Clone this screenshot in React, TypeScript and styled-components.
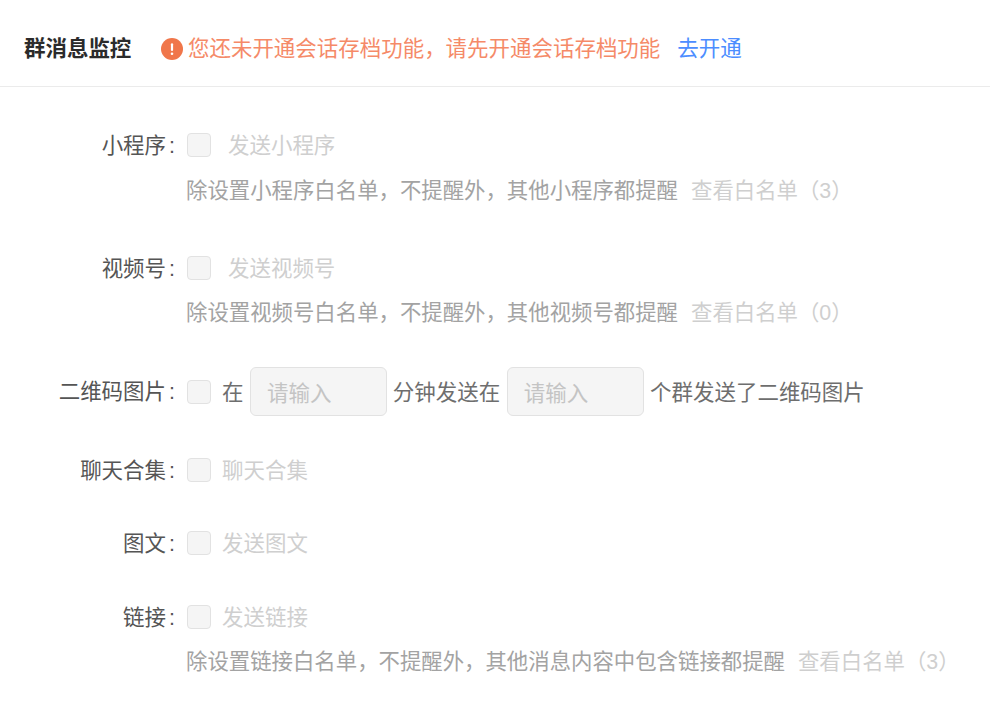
import styled, { createGlobalStyle, css } from "styled-components";

const GlobalStyle = createGlobalStyle`
    * { box-sizing: border-box; }
    html, body { margin: 0; padding: 0; background: #fff; }
    body {
        font-family: "Liberation Sans", "Noto Sans CJK SC", sans-serif;
        font-size: 21.47px;
        color: #555;
    }
`;

interface RuleData {
    label: string;
    text: string;
    gap: number;
    top: number;
    hint?: string;
    hintTop?: number;
    count?: number;
}

const rules: RuleData[] = [
    { label: "小程序", text: "发送小程序", gap: 17, top: 0, hint: "除设置小程序白名单，不提醒外，其他小程序都提醒", hintTop: 19, count: 3 },
    { label: "视频号", text: "发送视频号", gap: 17, top: 52, hint: "除设置视频号白名单，不提醒外，其他视频号都提醒", hintTop: 18, count: 0 },
];

const lowerRules: RuleData[] = [
    { label: "聊天合集", text: "聊天合集", gap: 11, top: 41 },
    { label: "图文", text: "发送图文", gap: 11, top: 47 },
    { label: "链接", text: "发送链接", gap: 11, top: 48, hint: "除设置链接白名单，不提醒外，其他消息内容中包含链接都提醒", hintTop: 18, count: 3 },
];

function Rule({ label, text, gap, hint, hintTop, count, top }: RuleData) {
    return (
        <RuleBlock $top={top}>
            <RuleLine>
                <RuleLabel>{label}<Colon>:</Colon></RuleLabel>
                <CheckBox />
                <DisabledText $gap={gap}>{text}</DisabledText>
            </RuleLine>
            {hint && (
                <HintLine $top={hintTop ?? 18}>
                    <HintText>{hint}</HintText>
                    <WhiteList>查看白名单（{count}）</WhiteList>
                </HintLine>
            )}
        </RuleBlock>
    );
}

export default function App() {
    return (
        <Page>
            <GlobalStyle />
            <Header>
                <Title>群消息监控</Title>
                <Warning>
                    <WarningIcon viewBox="0 0 22 22">
                        <circle cx="11" cy="11" r="11" fill="#f0764a" />
                        <rect x="9.9" y="5.2" width="2.2" height="7.8" rx="1.1" fill="#fff" />
                        <circle cx="11" cy="15.8" r="1.3" fill="#fff" />
                    </WarningIcon>
                    <WarningText>您还未开通会话存档功能，请先开通会话存档功能</WarningText>
                </Warning>
                <OpenLink>去开通</OpenLink>
            </Header>
            <Content>
                {rules.map((r) => (
                    <Rule key={r.label} {...r} />
                ))}
                <QrLine>
                    <RuleLabel>二维码图片<Colon>:</Colon></RuleLabel>
                    <CheckBox />
                    <PlainText $left={11}>在</PlainText>
                    <FakeInput>请输入</FakeInput>
                    <PlainText $left={5.5}>分钟发送在</PlainText>
                    <FakeInput>请输入</FakeInput>
                    <PlainText $left={6}>个群发送了二维码图片</PlainText>
                </QrLine>
                {lowerRules.map((r) => (
                    <Rule key={r.label} {...r} />
                ))}
            </Content>
        </Page>
    );
}

// the CJK font sits low in its line box, this lifts it back to the centre
const lifted = css`
    padding-bottom: 4px;
`;

const Page = styled.div`
    width: 990px;
    height: 725px;
    overflow: hidden;
    background: #fff;
`;

const Header = styled.div`
    height: 87px;
    display: flex;
    align-items: center;
    padding: 12px 0 0 24px;
    border-bottom: 1px solid #ebebeb;
`;

const Title = styled.div`
    width: 137px;
    padding-bottom: 6px;
    font-weight: 700;
    color: #2b2b2b;
    white-space: nowrap;
`;

const Warning = styled.div`
    display: flex;
    align-items: center;
    gap: 5px;
`;

const WarningIcon = styled.svg`
    width: 22px;
    height: 22px;
    flex: none;
`;

const WarningText = styled.span`
    padding-bottom: 6px;
    color: #f58a68;
    white-space: nowrap;
`;

const OpenLink = styled.a`
    margin-left: 17px;
    padding-bottom: 6px;
    color: #4c8dff;
    white-space: nowrap;
`;

const Content = styled.div`
    padding-top: 45px;
`;

const RuleBlock = styled.div<{ $top: number }>`
    margin-top: ${(p) => p.$top}px;
`;

const RuleLine = styled.div`
    display: flex;
    align-items: center;
    height: 26px;
`;

const RuleLabel = styled.div`
    ${lifted}
    width: 175px;
    flex: none;
    text-align: right;
    color: #555;
    white-space: nowrap;
`;

const Colon = styled.span`
    margin-left: 3px;
`;

const CheckBox = styled.span`
    width: 24px;
    height: 24px;
    flex: none;
    margin-left: 12px;
    background: #f5f5f5;
    border: 1px solid #e2e2e2;
    border-radius: 4px;
`;

const DisabledText = styled.span<{ $gap: number }>`
    ${lifted}
    margin-left: ${(p) => p.$gap}px;
    color: #cfcfcf;
    white-space: nowrap;
`;

const HintLine = styled.div<{ $top: number }>`
    display: flex;
    align-items: center;
    height: 26px;
    margin-top: ${(p) => p.$top}px;
    padding-left: 186px;
    font-size: 21.4px;
    white-space: nowrap;
`;

const HintText = styled.span`
    ${lifted}
    color: #a3a3a3;
`;

const WhiteList = styled.span`
    ${lifted}
    margin-left: 13px;
    color: #cfcfcf;
`;

const QrLine = styled.div`
    display: flex;
    align-items: center;
    height: 49px;
    margin-top: 42px;
`;

const PlainText = styled.span<{ $left: number }>`
    padding-bottom: 2px;
    margin-left: ${(p) => p.$left}px;
    color: #6e6e6e;
    white-space: nowrap;
`;

const FakeInput = styled.div`
    width: 137.4px;
    height: 49px;
    flex: none;
    margin-left: 6.5px;
    display: flex;
    align-items: center;
    padding-left: 16px;
    background: #f5f5f5;
    border: 1px solid #e2e2e2;
    border-radius: 6px;
    color: #c4c4c4;
`;
